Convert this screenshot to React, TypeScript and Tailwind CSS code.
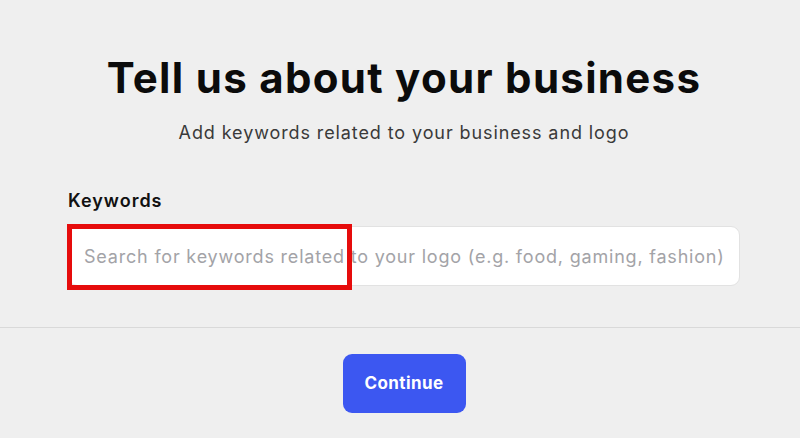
export default function App() {
  return (
    <div
      className="w-[800px] h-[438px] bg-[#efefef] pl-2 flex flex-col overflow-hidden relative"
      style={{ fontFamily: 'Inter, "Liberation Sans", sans-serif' }}
    >
      {/* Heading */}
      <div className="flex flex-col items-center pt-[53px]">
        <h1 className="text-[42px] leading-[50px] font-bold text-[#0b0b0b] tracking-[1.3px]">
          Tell us about your business
        </h1>
        <p className="mt-[18px] text-[18px] leading-[24px] text-[#3a3a3a] tracking-[0.9px]">
          Add keywords related to your business and logo
        </p>
      </div>

      {/* Keywords field */}
      <div className="mx-[60px] mt-[45px]">
        <label className="block text-[18px] leading-[22px] font-semibold text-[#111] tracking-[1px]">Keywords</label>
        <div className="relative mt-[14px]">
          <input
            type="text"
            placeholder="Search for keywords related to your logo (e.g. food, gaming, fashion)"
            className="w-full h-[60px] rounded-[9px] bg-white border border-[#e2e2e2] px-[15px] text-[18px] tracking-[0.8px] text-[#333] placeholder:text-[#a3a3a7] outline-none"
          />
          {/* annotation highlight */}
          <div className="absolute left-[-1px] top-[-2px] w-[285px] h-[66px] border-[5px] border-[#e60c0c] pointer-events-none" />
        </div>
      </div>

      {/* Divider + action */}
      <div className="ml-[-8px] mt-[41px] border-t border-[#d9d9d9] flex justify-center pl-2 pt-[26px]">
        <button className="w-[123px] h-[59px] rounded-[9px] bg-[#3c57f1] text-white text-[17px] font-bold tracking-[0.4px]">
          Continue
        </button>
      </div>
    </div>
  );
}
